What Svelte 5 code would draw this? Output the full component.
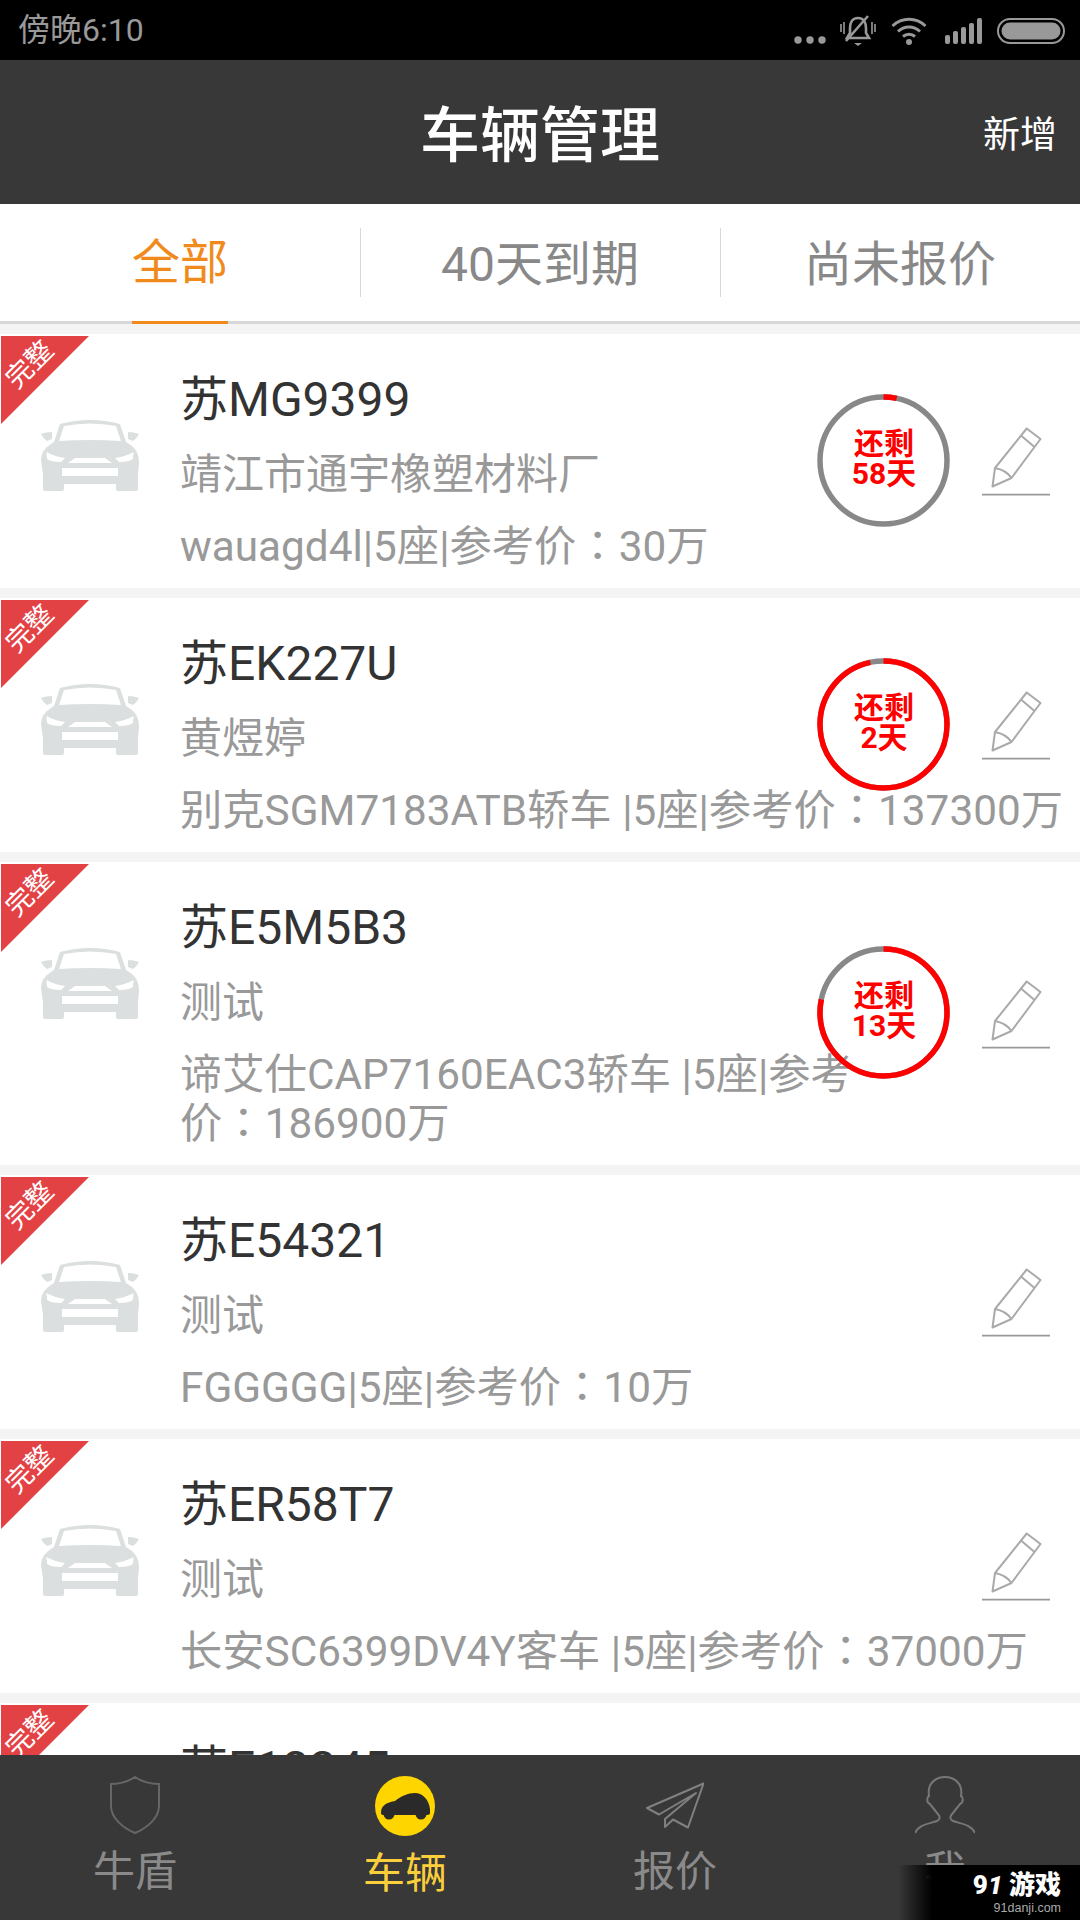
<script>
  const tabs = ["全部", "40天到期", "尚未报价"];

  const cars = [
    { plate: "苏MG9399", owner: "靖江市通宇橡塑材料厂", detail: "wauagd4l|5座|参考价：30万", days: 58 },
    { plate: "苏EK227U", owner: "黄煜婷", detail: "别克SGM7183ATB轿车 |5座|参考价：137300万", days: 2 },
    { plate: "苏E5M5B3", owner: "测试", detail: "谛艾仕CAP7160EAC3轿车 |5座|参考\n价：186900万", days: 13 },
    { plate: "苏E54321", owner: "测试", detail: "FGGGGG|5座|参考价：10万" },
    { plate: "苏ER58T7", owner: "测试", detail: "长安SC6399DV4Y客车 |5座|参考价：37000万" },
    { plate: "苏E12345", owner: "测试", detail: "FGGGGG|5座|参考价：10万" }
  ];
</script>

<main class="screen">
  <div class="status">
    <span class="status__time">傍晚6:10</span>
    <div class="status__icons">
      <svg width="32" height="8" viewBox="0 0 32 8"><circle cx="4" cy="4" r="3.7" /><circle cx="16" cy="4" r="3.7" /><circle cx="28" cy="4" r="3.7" /></svg>
      <svg class="status__bell" width="36" height="32" viewBox="0 0 36 32">
        <path d="M18 3c-6 0-8 5-8 10v5l-3 5h22l-3-5v-5c0-5-2-10-8-10z" fill="none" stroke="#999" stroke-width="2.6" />
        <path d="M6 26 28 1" stroke="#999" stroke-width="2.6" />
        <path d="M14 28h8l-4 3z" />
        <path d="M1 9v8M4 7v12M32 7v12M35 9v8" stroke="#999" stroke-width="1.6" />
      </svg>
      <svg class="status__wifi" width="36" height="28" viewBox="0 0 36 28">
        <g fill="none" stroke="#999" stroke-width="3">
          <path d="M1.5 9C11 0 25 0 34.500 9" />
          <path d="M7 14.500c6.500-6 15.500-6 22 0" />
          <path d="M12 19.500c3.500-3 8.500-3 12 0" />
        </g>
        <circle cx="18" cy="25" r="3" />
      </svg>
      <svg width="37" height="26" viewBox="0 0 37 26">
        <rect x="0" y="17" width="5" height="9" rx="2" /><rect x="8" y="13" width="5" height="13" rx="2" />
        <rect x="16" y="9" width="5" height="17" rx="2" /><rect x="24" y="5" width="5" height="21" rx="2" />
        <rect x="32" y="0" width="5" height="26" rx="2" />
      </svg>
      <svg width="68" height="26" viewBox="0 0 68 26">
        <rect x="1" y="1" width="66" height="24" rx="12" fill="none" stroke="#999" stroke-width="2" />
        <rect x="4.500" y="4.500" width="59" height="17" rx="8.500" />
      </svg>
    </div>
  </div>

  <header class="head">
    <h1>车辆管理</h1>
    <span class="head__add">新增</span>
  </header>

  <nav class="tabs">
    {#each tabs as tab, i}
      <div class="tabs__item" class:is-active={i === 0}>
        <span>{tab}</span>
      </div>
    {/each}
  </nav>

  <section class="list">
    {#each cars as car}
      {@const parts = car.detail.split("：")}
      <article class="car">
        <div class="car__badge"><span>完整</span></div>
        <svg class="car__thumb" width="100" height="73" viewBox="0 0 100 73">
          <path fill="#dcdfdf" d="M1 16q5-2 11-2v7l-5 2q-4-3-6-7zM99 16q-5-2-11-2v7l5 2q4-3 6-7zM11 26l3-2L20 6Q50-2 80 6l6 18 6 4q7 6 7 16l-1 12v15q0 2-2 2H78q-2 0-2-2v-5H24v5q0 2-2 2H5q-2 0-2-2V56L1 42q0-10 10-16z" />
          <path fill="#fff" d="M24 8Q50 3 76 8l5 15Q50 21 19 23zM6.500 34q9 5 18.500 6l-4 4Q11 44 7 41zM93.500 34q-9 5-18.500 6l4 4q10 0 14-3zM28 45l7-5h30l7 5zM22 50h56v8H22z" />
        </svg>
        <div class="car__text">
          <div class="car__plate">{car.plate}</div>
          <div class="car__owner">{car.owner}</div>
          <div class="car__detail">{parts[0]}<span class="car__colon">：</span>{parts[1]}</div>
        </div>
        <div class="car__side">
          {#if car.days !== undefined}
            <div class="ring">
              <svg width="133" height="133" viewBox="0 0 133 133">
                <circle cx="66.500" cy="66.500" r="63.500" fill="none" stroke="#888" stroke-width="5.500" />
                <circle
                  cx="66.500"
                  cy="66.500"
                  r="63.500"
                  fill="none"
                  stroke="#f00"
                  stroke-width="5.500"
                  pathLength="60"
                  stroke-dasharray="{60 - car.days} 60"
                  transform="rotate(-90 66.500 66.500)"
                />
              </svg>
              <div class="ring__label">还剩<br />{car.days}天</div>
            </div>
          {/if}
          <svg class="car__edit" width="68" height="70" viewBox="0 0 68 70">
            <g fill="none" stroke="#aaa" stroke-width="2" stroke-linejoin="round">
              <path d="M44.700 2.500 58.500 13 29.500 52 10.500 60.500 13 42z" />
              <path d="M39 9.500 52.500 21M13 42q11 2 16.500 10" />
            </g>
            <path d="M0 68.700h68" stroke="#999" stroke-width="1.800" />
          </svg>
        </div>
      </article>
    {/each}
  </section>

  <footer class="bar">
    <div class="bar__item">
      <svg width="52" height="58" viewBox="0 0 52 58">
        <path d="M26 1C20 5 10 8 2 8v22c0 12 12 22 24 27 12-5 24-15 24-27V8c-8 0-18-3-24-7z" fill="none" stroke="#666" stroke-width="2" />
      </svg>
      <span>牛盾</span>
    </div>
    <div class="bar__item is-active">
      <svg width="60" height="60" viewBox="0 0 60 60">
        <circle cx="30" cy="30" r="30" fill="#ffd500" />
        <path fill="#2a2a2a" d="M6 37c0-7 4-10 14-12 6-5 13-8 20-8 8 0 14 7 15 16v4q0 2-4 2H9q-3 0-3-2z" />
        <circle cx="14" cy="38" r="5.500" fill="#2a2a2a" /><circle cx="46" cy="38" r="5.500" fill="#2a2a2a" />
      </svg>
      <span>车辆</span>
    </div>
    <div class="bar__item">
      <svg width="58" height="58" viewBox="0 -7 58 58">
        <path d="M57.500.5 1 25l12 6.500L50 10 19 36v8l8-7.500 15 8z" fill="none" stroke="#808080" stroke-width="2" stroke-linejoin="round" />
      </svg>
      <span>报价</span>
    </div>
    <div class="bar__item">
      <svg width="60" height="58" viewBox="0 0 60 58">
        <path d="M0 57c4-9 14-9 22-12 4-2 3-5 0-8-2-3-5-6-7-9-4-2-3-7-1-8C12 8 20 1 30 1s18 7 16 19c2 1 3 6-1 8-2 3-5 6-7 9-3 3-4 6 0 8 8 3 18 3 22 12" fill="none" stroke="#777" stroke-width="2" />
      </svg>
      <span>我</span>
    </div>
  </footer>

  <div class="mark">
    <div class="mark__logo">9<i>1</i> 游戏</div>
    <div class="mark__url">91danji.com</div>
  </div>
</main>

<style>
  :global(body) {
    margin: 0;
  }

  .screen {
    background: #f4f4f4;
    display: flex;
    flex-direction: column;
    font-family: Roboto, "Noto Sans CJK SC", sans-serif;
    height: 1920px;
    overflow: hidden;
    position: relative;
    width: 1080px;
  }

  .status {
    align-items: center;
    background: #000;
    box-sizing: border-box;
    color: #999;
    display: flex;
    flex: none;
    height: 60px;
    justify-content: space-between;
    padding: 0 15px 0 18px;
  }

  .status__time {
    font-size: 32px;
    line-height: 60px;
  }

  .status__icons {
    align-items: center;
    display: flex;
    fill: #999;
    gap: 15px;
    padding-top: 1px;
  }

  .status__icons svg:first-child {
    margin-right: -1px;
    margin-top: 18px;
  }

  .status__wifi {
    margin-right: 3px;
  }

  .head {
    align-items: center;
    background: #383838;
    color: #fff;
    display: flex;
    flex: none;
    height: 144px;
    justify-content: center;
    position: relative;
  }

  .head h1 {
    font-size: 60px;
    font-weight: 500;
    margin: -3px 0 0;
  }

  .head__add {
    font-size: 37px;
    position: absolute;
    right: 23px;
    top: 50%;
    transform: translateY(-50%);
  }

  .tabs {
    background: #fff;
    border-bottom: 3px solid #d8d8d8;
    box-sizing: border-box;
    color: #888;
    display: grid;
    flex: none;
    font-size: 48px;
    grid-template-columns: repeat(3, 1fr);
    height: 120px;
    margin-bottom: 10px;
  }

  .tabs__item {
    align-items: center;
    display: flex;
    justify-content: center;
    position: relative;
  }

  .tabs__item + .tabs__item::before {
    background: #d8d8d8;
    content: "";
    height: 69px;
    left: 0;
    position: absolute;
    top: 24px;
    width: 1px;
  }

  .tabs__item span {
    line-height: 117px;
    margin-bottom: -3px;
  }

  .is-active.tabs__item span {
    border-bottom: 3px solid #f08a1c;
    color: #f08a1c;
  }

  .list {
    display: flex;
    flex: 1;
    flex-direction: column;
    gap: 10px;
    min-height: 0;
  }

  .car {
    align-items: flex-start;
    background: #fff;
    display: flex;
    flex: none;
    gap: 41px;
    padding-left: 40px;
    position: relative;
  }

  .car__badge {
    background: #e34245;
    clip-path: polygon(0 0, 100% 0, 0 100%);
    height: 88px;
    left: 1px;
    position: absolute;
    top: 2px;
    width: 88px;
  }

  .car__badge span {
    color: #fff;
    font-size: 27px;
    left: 29px;
    line-height: 1;
    position: absolute;
    top: 29px;
    transform: translate(-50%, -50%) rotate(-45deg);
    white-space: nowrap;
  }

  .car__thumb {
    flex: none;
    margin-top: 84px;
  }

  .car__text {
    display: flex;
    flex-direction: column;
    margin-left: -1px;
    min-width: 0;
    padding: 41px 0 17px;
  }

  .car__plate {
    color: #333;
    font-size: 48px;
    line-height: 50px;
  }

  .car__owner {
    color: #999;
    font-size: 42px;
    line-height: 50px;
    margin: 25px 0 22px;
  }

  .car__detail {
    color: #999;
    font-size: 42.300px;
    line-height: 49px;
    white-space: pre-line;
  }

  .car__colon {
    font-family: "Noto Sans CJK TC", sans-serif;
    line-height: 0;
  }

  .car__side {
    align-items: center;
    bottom: 0;
    display: flex;
    gap: 32px;
    position: absolute;
    right: 30px;
    top: 0;
  }

  .car__edit {
    flex: none;
  }

  .ring {
    height: 133px;
    margin-bottom: 2px;
    position: relative;
    width: 133px;
  }

  .ring svg {
    display: block;
  }

  .ring__label {
    color: #f00;
    font-size: 30px;
    font-weight: 700;
    inset: 0;
    left: 1px;
    line-height: 30px;
    position: absolute;
    text-align: center;
    top: 35px;
  }

  .bar {
    background: #383838;
    color: #8a8a8a;
    display: grid;
    flex: none;
    font-size: 42px;
    grid-template-columns: repeat(4, 1fr);
    height: 165px;
    position: relative;
  }

  .bar__item {
    align-items: center;
    display: flex;
    flex-direction: column;
    gap: 13px;
    padding-top: 21px;
  }

  .bar__item svg {
    display: block;
  }

  .bar__item span {
    line-height: 50px;
  }

  .bar__item.is-active {
    color: #fbcf3c;
  }

  .mark {
    background: linear-gradient(90deg, transparent 0, #000 34px);
    bottom: 0;
    box-sizing: border-box;
    color: #fff;
    height: 55px;
    padding: 6px 19px 0 0;
    position: absolute;
    right: 0;
    text-align: right;
    width: 182px;
  }

  .mark__logo {
    font-size: 26px;
    font-weight: 900;
    line-height: 28px;
  }

  .mark__logo i {
    font-style: italic;
  }

  .mark__url {
    color: #aaa;
    font-family: "Liberation Sans", sans-serif;
    font-size: 12.500px;
    line-height: 18px;
  }
</style>
